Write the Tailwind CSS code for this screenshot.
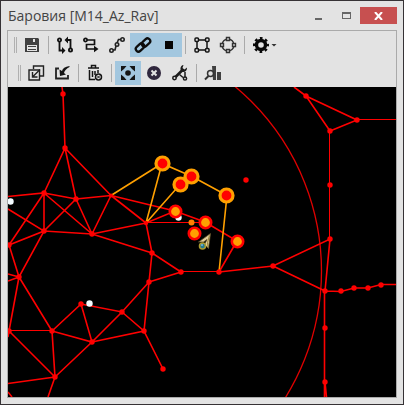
<!DOCTYPE html>
<html lang="ru">
<head>
<meta charset="utf-8">
<meta name="viewport" content="width=device-width, initial-scale=1">
<title>Баровия [M14_Az_Rav]</title>
<script src="https://cdn.jsdelivr.net/npm/@tailwindcss/browser@4"></script>
</head>
<body class="bg-[#e3e3e3] font-['Open_Sans','Noto_Sans',sans-serif]">
<main class="flex h-screen flex-col border border-[#363235] bg-[#e3e3e3] px-1.5 pb-1.5">
  <header class="flex h-[29px] shrink-0 items-center justify-between">
    <h1 class="pl-px text-sm leading-5 whitespace-nowrap text-[#444]">Баровия [M14_Az_Rav]</h1>
    <div class="flex h-[17px]">
      <button aria-label="Свернуть" class="grid w-[27px] place-items-center"><svg width="9" height="13"><path d="M1 9h7v2H1z" fill="#666"/></svg></button>
      <button aria-label="Развернуть" class="grid w-7 place-items-center"><svg width="9" height="7"><path fill="#666" fill-rule="evenodd" d="M0 0h9v7H0zM1 2v4h7V2z"/></svg></button>
      <button aria-label="Закрыть" class="grid w-[37px] place-items-center bg-[#c75050]"><svg width="9" height="8"><path d="M1 0l7 8M8 0L1 8" stroke="#fff" stroke-width="2"/></svg></button>
    </div>
  </header>
  <section class="flex min-h-0 flex-1 flex-col border border-[#aaa]">
    <div role="toolbar" aria-label="Инструменты" class="flex h-7 shrink-0 items-center pl-1.5">
      <span class="mr-0.5 h-4 w-[3px] border-x border-[#b0b0b0]"></span>
      <button aria-label="Сохранить" class="grid h-6 w-[26px] place-items-center"><svg width="18" height="18" fill="#404040"><path fill-rule="evenodd" d="M2 2h13l1 1v13H2zM5 2v5h8V2zM4 9v6h10V9z"/><path fill-rule="evenodd" d="M5 2h8v5H5zM10 3v3h2V3z"/><path d="M5 10h8v1H5zM5 13h8v1H5z"/></svg></button>
      <span class="mx-[3px] h-[18px] w-px bg-[#aaa]"></span>
      <button aria-label="Обратный путь" class="grid h-6 w-[26px] place-items-center"><svg width="18" height="18" fill="none" stroke="#111" stroke-width="1.800"><circle cx="3.500" cy="4" r="1.600"/><circle cx="14.500" cy="14" r="1.600"/><path d="M3.500 6v8.500h4M14.500 12V4h-4"/><path d="M6 11l3.500 3.500L6 18zM12 .5L8.500 4 12 7.500z" fill="#111" stroke="none"/></svg></button>
      <button aria-label="Направленный путь" class="grid h-6 w-[26px] place-items-center"><svg width="18" height="18" fill="none" stroke="#111" stroke-width="1.700"><circle cx="3.500" cy="4" r="1.600"/><path d="M5 4h7.500v4.500H4.500V13H14"/><path d="M12 9.800l4.500 3.200-4.500 3.200z" fill="#111" stroke="none"/></svg></button>
      <button aria-label="Кривая" class="grid h-6 w-[26px] place-items-center"><svg width="18" height="18" fill="none" stroke="#222" stroke-width="1.600"><circle cx="14.500" cy="3.500" r="1.700"/><circle cx="9" cy="8.500" r="1.700"/><circle cx="3.500" cy="14.500" r="1.700"/><path d="M13 3.500h-2.500L9 7M8 10l-1 4H5"/></svg></button>
      <button aria-label="Связать" aria-pressed="true" class="grid h-6 w-[26px] place-items-center bg-[#a3c7df]"><svg width="18" height="18" fill="none" stroke="#0c0c0c" stroke-width="2.300"><rect x="-4.700" y="-2.700" width="9.400" height="5.400" rx="2.700" transform="translate(6 11.500) rotate(-42)"/><rect x="-4.700" y="-2.700" width="9.400" height="5.400" rx="2.700" transform="translate(12 6.500) rotate(-42)"/></svg></button>
      <button aria-label="Точка" aria-pressed="true" class="grid h-6 w-[26px] place-items-center bg-[#a3c7df]"><svg width="8" height="8"><rect width="8" height="8" fill="#050505"/></svg></button>
      <span class="mx-[3px] h-[18px] w-px bg-[#aaa]"></span>
      <button aria-label="Прямоугольник" class="grid h-6 w-[26px] place-items-center"><svg width="18" height="18" fill="#e3e3e3" stroke="#151515" stroke-width="1.500"><path d="M4 4h10v10H4z"/><rect x="2" y="2" width="3.500" height="3.500" rx="1"/><rect x="12.500" y="2" width="3.500" height="3.500" rx="1"/><rect x="2" y="12.500" width="3.500" height="3.500" rx="1"/><rect x="12.500" y="12.500" width="3.500" height="3.500" rx="1"/></svg></button>
      <button aria-label="Окружность" class="grid h-6 w-[26px] place-items-center"><svg width="18" height="18" fill="#e3e3e3" stroke="#333" stroke-width="1.400"><circle cx="9" cy="9" r="6"/><path d="M7.500 1.500h3v3h-3zM7.500 13.500h3v3h-3zM1.500 7.500h3v3h-3zM13.500 7.500h3v3h-3z"/></svg></button>
      <span class="mx-[3px] h-[18px] w-px bg-[#aaa]"></span>
      <button aria-label="Настройки" class="flex h-6 items-center pl-[5px]"><svg width="24" height="18"><circle cx="8" cy="9" r="4.500" fill="none" stroke="#080808" stroke-width="3.400"/><circle cx="8" cy="9" r="6.900" fill="none" stroke="#080808" stroke-width="2.200" stroke-dasharray="2.710 2.710" stroke-dashoffset="1.350"/><path d="M18.500 8h5L21 10.500z" fill="#333"/></svg></button>
    </div>
    <div role="toolbar" aria-label="Правка" class="flex h-7 shrink-0 items-center pl-2.5">
      <span class="mr-0.5 h-4 w-[3px] border-x border-[#b0b0b0]"></span>
      <button aria-label="Копировать" class="grid h-6 w-[26px] place-items-center"><svg width="18" height="18" fill="none" stroke="#222" stroke-width="1.400"><path d="M6.500 5V2h10v10H13"/><path d="M2 6h10.500v10H2z"/><path d="M13 5.500l-7 7M5.500 8v5h5"/></svg></button>
      <button aria-label="Импорт" class="grid h-6 w-[26px] place-items-center"><svg width="18" height="18"><path d="M6 4.500H3v10h12V11" fill="none" stroke="#222" stroke-width="1.800"/><path d="M16.500 2C12 2.500 9.500 4.500 9 7L6.500 5.500 7 12l6-1.500-2-1.500c.5-2.500 2.500-4.500 5.500-6z" fill="#151515"/></svg></button>
      <span class="mx-[3px] h-[18px] w-px bg-[#aaa]"></span>
      <button aria-label="Удалить" class="grid h-6 w-[26px] place-items-center"><svg width="18" height="18" fill="none" stroke="#151515" stroke-width="1.500"><path d="M2 4h11M5.500 3.500v-2h4v2M3.500 6v9.500H9M6.500 7v6M9 7v4M12 6v3"/><circle cx="12.500" cy="13" r="3"/><path d="M11 11.500l3 3M14 11.500l-3 3" stroke-width="1"/></svg></button>
      <span class="mx-[3px] h-[18px] w-px bg-[#aaa]"></span>
      <button aria-label="Центрировать" aria-pressed="true" class="grid h-6 w-[26px] place-items-center bg-[#a3c7df]"><svg width="16" height="16" fill="#151515"><circle cx="8" cy="8" r="2.800"/><path d="M1 1h5.500L4 4 1 6.500zM15 1H9.500L12 4l3 2.500zM1 15h5.500L4 12 1 9.500zM15 15H9.500l2.500-3 3-2.500z"/></svg></button>
      <button aria-label="Отмена" class="grid h-6 w-[26px] place-items-center"><svg width="16" height="16"><circle cx="8" cy="8" r="7" fill="#30273d"/><path d="M5.500 5.500l5 5M10.500 5.500l-5 5" stroke="#e3e3e3" stroke-width="2"/></svg></button>
      <button aria-label="Инструмент узлов" class="grid h-6 w-[26px] place-items-center"><svg width="18" height="18" fill="none" stroke="#1c1c1c" stroke-width="1.500"><path d="M4 13.500L11 6.500" stroke-width="2.600"/><path d="M12.500 1C9 1.500 8.500 6 11 7.800c3 .8 5.300-1.300 5-4.300L13.500 5.500l-2-1.500z" fill="#1c1c1c" stroke="none"/><circle cx="3.500" cy="14" r="1.700" fill="#e3e3e3"/><path d="M8.500 10.500l3.500 3M14 8v5"/><circle cx="14" cy="14.500" r="1.600" fill="#e3e3e3"/></svg></button>
      <span class="mx-[3px] h-[18px] w-px bg-[#aaa]"></span>
      <button aria-label="Статистика" class="grid h-6 w-[26px] place-items-center"><svg width="18" height="18"><path d="M8 2h4v14H9zM13 8h4v8h-4z" fill="#404040"/><circle cx="6.500" cy="9.500" r="3" fill="#e3e3e3" stroke="#333" stroke-width="1.500"/><path d="M4.500 12L1 15.500" stroke="#333" stroke-width="2"/></svg></button>
    </div>
    <div class="min-h-0 flex-1 bg-black">
      <svg role="img" aria-label="Карта узлов" class="block h-full w-full" viewBox="8 87 388 310" preserveAspectRatio="xMinYMin slice">
        <circle cx="81.500" cy="271" r="240" fill="none" stroke="#e00000" stroke-width="1.300"/>
        <path fill="none" stroke="#f00" stroke-width="1.600" d="M62 87L63 94L65 148L44 193M65 148L76 199M65 148L111 195.500M8 196.500L44 193V231M44 193L76 199L111 195.500M44 193L92 234M44 193L9 245M76 199L44 231M76 199L92 234L111 195.500M111 195.500L146 223M111 195.500L175 211M8 209L44 231L9 245L19 277L44 231L92 234L146 223M92 234L152 253M19 277L8 274M19 277L8 281M19 277L9 331M19 277L52 331M146 223L152 253L181 272M149 282L181 272M219 272L237 241L205 222L175 211L146 223M152 253L149 282L144 331L163 369M149 282L122 312L81 304L52 331M9 331L55 377L52 331L92 342L81 304M122 312L92 342L55 377M122 312L144 331L92 342M55 377L8 383.500M55 377L48 397M8 392L12 397M8 337L9 331M219 272L273 266L330 239L325 291L273 266M294 87L306 96L357 120L330 131L306 96M325 291L341 291.500L354 288H368L381 284.500H396M324.500 291V397M325 382L326.500 397"/>
        <path fill="none" stroke="#f00" d="M146 222.500H205M181 271.500H219M9 330.500H52M357 119.500H396M329.500 131V239"/>
        <path fill="none" stroke="#ffa000" stroke-width="1.600" d="M111 195.500L162 163.500L192 176.500L227 195.500L219 272M162 163.500L146 223L180 184.500L192 176.500"/>
        <g fill="#f4fbff"><circle cx="10.500" cy="201.500" r="3.200"/><circle cx="89.500" cy="303.500" r="3.200"/><circle cx="178.500" cy="217.500" r="3.200"/></g>
        <g fill="#f00">
          <circle cx="63" cy="94" r="2.700"/><circle cx="65" cy="148" r="2.700"/><circle cx="44" cy="193" r="2.700"/><circle cx="76" cy="199" r="2.700"/><circle cx="111" cy="195.500" r="2"/><circle cx="44" cy="231" r="2.700"/><circle cx="92" cy="234" r="2.700"/><circle cx="9" cy="245" r="2.700"/><circle cx="19" cy="277" r="2.700"/><circle cx="146" cy="223" r="2.200"/><circle cx="152" cy="253" r="2.700"/><circle cx="181" cy="272" r="2.700"/><circle cx="219" cy="272" r="2.700"/><circle cx="149" cy="282" r="2.700"/><circle cx="144" cy="331" r="2.700"/><circle cx="163" cy="369" r="2.700"/><circle cx="122" cy="312" r="2.700"/><circle cx="81" cy="304" r="2.700"/><circle cx="52" cy="331" r="2.700"/><circle cx="92" cy="342" r="2.700"/><circle cx="55" cy="377" r="2.700"/><circle cx="9" cy="331" r="2.700"/><circle cx="246" cy="180" r="2.700"/><circle cx="306" cy="96" r="2.700"/><circle cx="357" cy="120" r="2.700"/><circle cx="330" cy="131" r="2.700"/><circle cx="330" cy="185" r="2.700"/><circle cx="330" cy="239" r="2.700"/><circle cx="273" cy="266" r="2.700"/><circle cx="325" cy="291" r="2.700"/><circle cx="341" cy="291" r="2.700"/><circle cx="354" cy="288" r="2.700"/><circle cx="368" cy="288" r="2.700"/><circle cx="381" cy="285" r="2.700"/><circle cx="325" cy="328" r="2.700"/><circle cx="325" cy="382" r="2.700"/>
        </g>
        <g fill="#f00" stroke="#ffa000" stroke-width="3.200"><circle cx="162.500" cy="163.500" r="6.500"/><circle cx="180.500" cy="184.500" r="6.500"/><circle cx="191.500" cy="176.500" r="6.500"/><circle cx="226.500" cy="195.500" r="6.500"/></g>
        <g fill="#ffa000" stroke="#f00" stroke-width="2.600"><circle cx="175.500" cy="211.500" r="5.700"/><circle cx="205.500" cy="222.500" r="5.700"/><circle cx="194.500" cy="233.500" r="5.700"/><circle cx="237.500" cy="241.500" r="5.700"/></g>
        <circle cx="191.500" cy="222.500" r="3" fill="#ff8000"/>
        <path d="M210.500 233.500L198.500 242l5 0 3.500-2.500-2.500 5 4 4z" fill="#e0cc98" stroke="#5a4b25" stroke-width=".8"/>
        <path d="M209.500 235.500l-2 7 .5 5" fill="none" stroke="#968132"/>
        <circle cx="202.500" cy="246" r="3" fill="#237a91" stroke="#a99a30" stroke-width="1.600"/><circle cx="202" cy="245" r="1" fill="#7bb7dc"/>
      </svg>
    </div>
  </section>
</main>
</body>
</html>
